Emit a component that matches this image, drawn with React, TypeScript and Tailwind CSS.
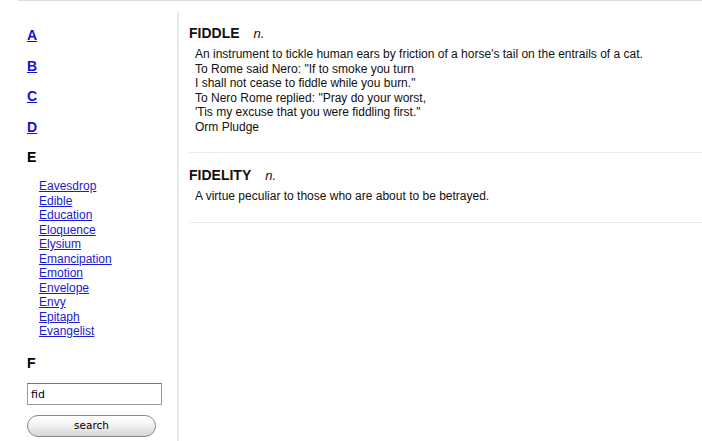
import React from "react";

const letters = ["A", "B", "C", "D"];
const eWords = [
  "Eavesdrop",
  "Edible",
  "Education",
  "Eloquence",
  "Elysium",
  "Emancipation",
  "Emotion",
  "Envelope",
  "Envy",
  "Epitaph",
  "Evangelist",
];

function Entry({ word, lines }: { word: string; lines: string[] }) {
  return (
    <div className="border-b border-[#ebebeb] pb-[18px] pt-[13px]">
      <div className="flex items-baseline leading-[18px] text-[#111]">
        <span className="text-[14px] font-bold">{word}</span>
        <span className="ml-[14px] text-[13px] italic">n.</span>
      </div>
      <div className="mt-[4px] pl-[6px] text-[12px] leading-[14.5px] text-[#111]">
        {lines.map((l, i) => (
          <div key={i}>{l}</div>
        ))}
      </div>
    </div>
  );
}

export default function App() {
  return (
    <div className="w-[702px] h-[441px] overflow-hidden bg-white font-['Liberation_Sans',Arial,sans-serif]">
      <div className="ml-[18px] h-px bg-[#dedede]" />
      <div className="flex h-[440px]">
        <aside className="w-[177px] shrink-0 pl-[27px] pt-[19px]">
          {letters.map((l) => (
            <div key={l} className="text-[14px] font-bold leading-[30.5px]">
              <a href="#" className="text-[#1010dd] underline">
                {l}
              </a>
            </div>
          ))}
          <div className="text-[14px] font-bold leading-[30.5px] text-black">E</div>
          <ul className="mt-[6.5px] pl-[12px] text-[12px] leading-[14.5px]">
            {eWords.map((w) => (
              <li key={w}>
                <a href="#" className="text-[#1a1ad0] underline">
                  {w}
                </a>
              </li>
            ))}
          </ul>
          <div className="mt-[9.5px] text-[14px] font-bold leading-[30.5px] text-black">F</div>
          <input
            defaultValue="fid"
            className="mt-[4.5px] block h-[22px] w-[135px] border border-[#9a9a9a] border-t-[#777] bg-white px-[3px] font-['DejaVu_Sans',sans-serif] text-[11px] text-black outline-none"
          />
          <button className="mt-[10px] block h-[22px] w-[129px] rounded-full border border-[#8a8a8a] bg-gradient-to-b from-[#ffffff] via-[#f0f0f0] to-[#d6d6d6] font-['DejaVu_Sans',sans-serif] text-[10.5px] text-black shadow-[inset_0_1px_0_#fff]">
            search
          </button>
        </aside>
        <div className="mt-[11px] w-[2px] shrink-0 bg-[#ebebeb]" />
        <main className="flex-1 pl-[10px] pt-[10px]">
          <Entry
            word="FIDDLE"
            lines={[
              "An instrument to tickle human ears by friction of a horse's tail on the entrails of a cat.",
              'To Rome said Nero: "If to smoke you turn',
              'I shall not cease to fiddle while you burn."',
              'To Nero Rome replied: "Pray do your worst,',
              "'Tis my excuse that you were fiddling first.\"",
              "Orm Pludge",
            ]}
          />
          <Entry
            word="FIDELITY"
            lines={["A virtue peculiar to those who are about to be betrayed."]}
          />
        </main>
      </div>
    </div>
  );
}
